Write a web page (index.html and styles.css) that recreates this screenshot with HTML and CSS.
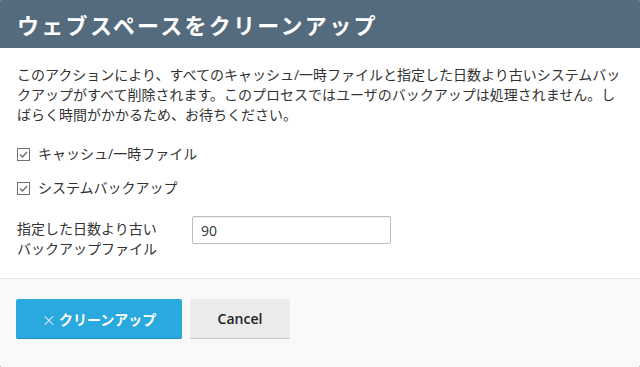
FILE: index.html
```html
<!DOCTYPE html>
<html lang="ja">
<head>
<meta charset="utf-8">
<link rel="stylesheet" href="styles.css">
</head>
<body>
<div class="dialog">
  <div class="header"><h1 class="title">ウェブスペースをクリーンアップ</h1></div>
  <div class="content">
    <p class="desc">このアクションにより、すべてのキャッシュ/一時ファイルと指定した日数より古いシステムバックアップがすべて削除されます。このプロセスではユーザのバックアップは処理されません。しばらく時間がかかるため、お待ちください。</p>
    <div class="check-row">
      <span class="box"><svg viewBox="0 0 13 13" width="13" height="13"><path d="M3 6.5 L5.5 9 L10 4" fill="none" stroke="#6b6b6b" stroke-width="1.3"/></svg></span>
      <span class="check-label">キャッシュ/一時ファイル</span>
    </div>
    <div class="check-row second">
      <span class="box"><svg viewBox="0 0 13 13" width="13" height="13"><path d="M3 6.5 L5.5 9 L10 4" fill="none" stroke="#6b6b6b" stroke-width="1.3"/></svg></span>
      <span class="check-label">システムバックアップ</span>
    </div>
    <div class="form-row">
      <label class="field-label">指定した日数より古い<br>バックアップファイル</label>
      <input class="field" type="text" value="90">
    </div>
  </div>
  <div class="footer">
    <button class="btn primary"><span class="x">×</span> クリーンアップ</button>
    <button class="btn secondary">Cancel</button>
  </div>
</div>
</body>
</html>
```
FILE: styles.css
```css
html, body {
  margin: 0;
  padding: 0;
  background: #4a5a68;
}
body {
  font-family: "Open Sans", "Noto Sans CJK JP", sans-serif;
  color: #333;
  font-size: 14px;
}
.dialog {
  height: 367px;
  display: flex;
  flex-direction: column;
  background: #fff;
  border-radius: 2px;
  overflow: hidden;
}
.header {
  height: 48px;
  background: #546a7d;
  display: flex;
  align-items: center;
  padding: 0 17px;
  box-sizing: border-box;
}
.title {
  margin: 0;
  color: #fff;
  font-family: "Noto Sans CJK JP", sans-serif;
  font-weight: 700;
  font-size: 22px;
  line-height: 28px;
  letter-spacing: 2.3px;
  padding-bottom: 1px;
}
.content {
  padding: 17px 12px 19px 17px;
  border-bottom: 1px solid #e6e6e6;
}
.desc {
  margin: 0;
  line-height: 20px;
}
.check-row {
  display: flex;
  align-items: center;
  height: 20px;
  margin-top: 19px;
}
.check-row.second {
  margin-top: 14px;
}
.box {
  width: 13px;
  height: 13px;
  box-sizing: border-box;
  border: 1px solid #707070;
  background: #fff;
  display: flex;
  margin-right: 8px;
  margin-top: 1px;
}
.box svg {
  margin: -1px;
}
.check-label {
  line-height: 20px;
}
.form-row {
  display: flex;
  align-items: flex-start;
  margin-top: 18px;
}
.field-label {
  width: 175px;
  line-height: 20px;
  padding-top: 3px;
}
.field {
  width: 199px;
  height: 28px;
  box-sizing: border-box;
  border: 1px solid #bdbdbd;
  border-radius: 2px;
  padding: 0 8px;
  font-family: "Open Sans", "Noto Sans CJK JP", sans-serif;
  font-size: 14px;
  color: #333;
  box-shadow: inset 0 1px 1px rgba(0,0,0,0.06);
  outline: none;
}
.footer {
  flex: 1;
  background: #f9f9f9;
  display: flex;
  align-items: flex-start;
  gap: 8px;
  padding: 20px 16px;
}
.btn {
  height: 40px;
  border: none;
  border-radius: 2px;
  font-size: 14px;
  font-weight: 600;
  cursor: pointer;
  padding: 0;
}
.primary {
  width: 166px;
  background: #29a9dd;
  color: #fff;
  border-bottom: 1px solid #1f8fc0;
  font-family: "Noto Sans CJK JP", sans-serif;
  font-weight: 700;
}
.x {
  font-weight: 300;
  font-family: "Noto Sans CJK JP", sans-serif;
  font-size: 14px;
}
.secondary {
  width: 100px;
  background: #ebebeb;
  color: #222;
  border-bottom: 1px solid #c4c4c4;
  font-family: "Open Sans", sans-serif;
}
```
